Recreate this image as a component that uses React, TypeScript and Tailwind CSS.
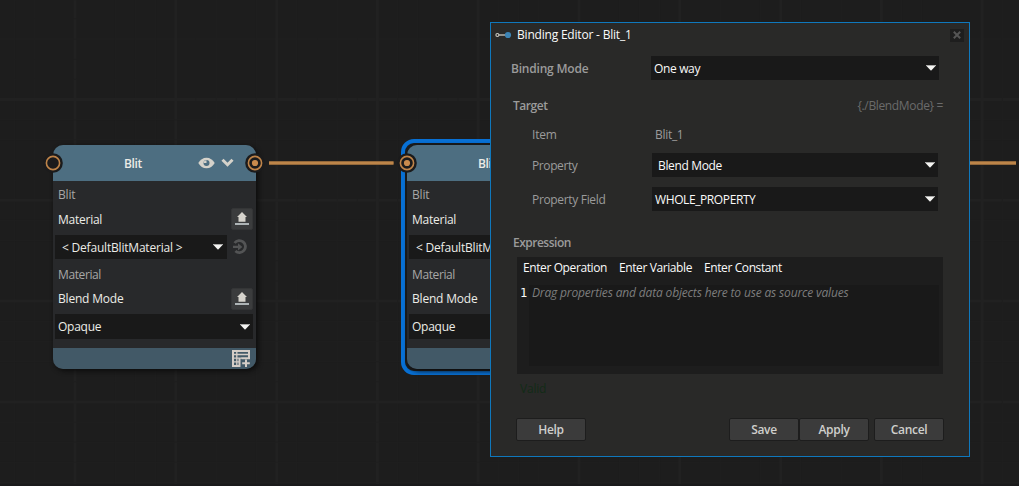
import type { ReactNode } from "react";

function Caret({ className = "" }: { className?: string }) {
  return (
    <svg className={`shrink-0 ${className}`} width="10" height="6" viewBox="0 0 10 6">
      <path d="M0 0.5H10L5 5.7Z" fill="#f4f4f2" />
      <path d="M0 0.5H10" stroke="#a9a9a8" strokeWidth="1" />
    </svg>
  );
}

function Port({ connected = false, className = "" }: { connected?: boolean; className?: string }) {
  return (
    <svg className={`absolute ${className}`} width="20" height="20" viewBox="0 0 20 20">
      <circle cx="10" cy="10" r="9.8" fill="#1b1b1c" />
      <circle cx="10" cy="10" r="6.6" fill="none" stroke="#bf8449" strokeWidth="1.6" />
      {connected && <circle cx="10" cy="10" r="3.1" fill="#c98b4d" />}
    </svg>
  );
}

function UploadButton({ className = "" }: { className?: string }) {
  return (
    <div className={`flex w-[22px] shrink-0 items-center justify-center rounded-[2px] border border-[#343536] bg-[#3b3c3d] ${className}`}>
      <svg width="16" height="14" viewBox="0 0 16 14">
        <path d="M8 0L13 5H11.5V9.8H4.5V5H3Z" fill="#d6d3cc" />
        <path d="M1 12H15" stroke="#aeb4b6" strokeWidth="2" />
      </svg>
    </div>
  );
}

function BlitNode({ className = "" }: { className?: string }) {
  return (
    <div className={`absolute top-[145px] h-[224px] w-[203px] text-[#ecece7] ${className}`}>
      <div className="flex h-full flex-col overflow-hidden rounded-[10px] bg-[#28292b] shadow-[2px_2px_5px_#0c0c0c]">
        {/* Header */}
        <div className="flex h-9 shrink-0 items-center bg-[#4d6e81] pl-[71px]">
          <span className="w-[74px] pt-px font-semibold tracking-[-0.4px]">Blit</span>
          <svg width="17" height="12" viewBox="0 0 17 12">
            <path d="M0.3 6C2.3 2.7 5 0.7 8.5 0.7S14.7 2.7 16.7 6C14.7 9.3 12 11.3 8.5 11.3S2.3 9.3 0.3 6Z" fill="#d5d2ca" />
            <circle cx="8.5" cy="6" r="3" fill="#4d6e81" />
            <path d="M8.5 6V3.2A2.8 2.8 0 0 0 5.7 6Z" fill="#d5d2ca" />
          </svg>
          <svg className="ml-[6px]" width="13" height="10" viewBox="0 0 13 10">
            <path d="M1.5 1.8L6.5 6.7L11.5 1.8" fill="none" stroke="#d5d2ca" strokeWidth="3" />
          </svg>
        </div>

        {/* Properties */}
        <div className="flex h-[167px] shrink-0 flex-col pt-1">
          <div className="flex h-5 items-center pl-[5px] text-[#a7a7a6]">
            <span className="tracking-[-0.2px]">Blit</span>
          </div>
          <div className="mt-[3px] flex h-[22px] items-center justify-between pl-[5px] pr-[3px]">
            <span className="pt-[2px] tracking-[-0.25px]">Material</span>
            <UploadButton className="h-[22px]" />
          </div>
          <div className="mt-[5px] flex h-6 items-center pl-[2px]">
            <div className="flex h-6 w-[172px] items-center justify-between bg-[#191919] pl-[7px] pr-1">
              <span className="pt-px tracking-[-0.2px]">&lt; DefaultBlitMaterial &gt;</span>
              <Caret />
            </div>
            <svg className="ml-[5px]" width="16" height="16" viewBox="0 0 16 16">
              <path d="M2.6 4A6 6 0 1 1 3.4 12" fill="none" stroke="#535455" strokeWidth="2.8" />
              <path d="M1 7.9H7" stroke="#535455" strokeWidth="2.2" />
              <path d="M6 4.2L10.4 7.9L6 11.6Z" fill="#535455" />
            </svg>
          </div>
          <div className="mt-[6px] flex h-5 items-center pl-[5px] text-[#a7a7a6]">
            <span className="tracking-[-0.4px]">Material</span>
          </div>
          <div className="mt-[3px] flex h-[21px] items-center justify-between pl-[5px] pr-[3px]">
            <span className="tracking-[-0.2px]">Blend Mode</span>
            <UploadButton className="h-[22px]" />
          </div>
          <div className="ml-[2px] mt-[5px] flex h-[25px] w-[198px] items-center justify-between bg-[#191919] pl-[3px] pr-[3px]">
            <span className="tracking-[-0.25px]">Opaque</span>
            <Caret />
          </div>
        </div>

        {/* Footer */}
        <div className="flex flex-1 items-start justify-end bg-[#425967] pr-[6px] pt-[2px]">
          <svg width="18" height="17" viewBox="0 0 18 17" fill="none" stroke="#d4cdc7">
            <path d="M1 1H17V8.2H9.5M1 0V16H7.5V8" strokeWidth="2" />
            <path d="M1 4.5H17M1 8.2H10M4.8 1V16M1 11.8H7.5" strokeWidth="1.3" />
            <path d="M14 9.5V17M10.2 13.2H17.8" strokeWidth="2" />
          </svg>
        </div>
      </div>
    </div>
  );
}

function Grid() {
  const lines = Array.from({ length: 52 }, (_, i) => i - 4);
  return (
    <svg className="absolute inset-0" width="1019" height="486">
      {lines.map((i) => (
        <g key={i} stroke={i % 5 === 0 ? "#212121" : "#1f1f1f"} strokeWidth={i % 5 === 0 ? 3 : 1}>
          <path d={`M${75 + i * 20.16} 0V486`} />
          <path d={`M0 ${99.5 + (i - 5) * 20.16}H1019`} />
        </g>
      ))}
      <path d="M0 485H1019" stroke="#1a1a1b" strokeWidth="2" />
    </svg>
  );
}

function Select({ children, className }: { children: ReactNode; className: string }) {
  return (
    <div className={`flex h-6 items-center justify-between bg-[#191919] pr-[3px] text-[#fafafa] ${className}`}>
      {children}
      <Caret />
    </div>
  );
}

function Button({ label, className = "" }: { label: string; className?: string }) {
  return (
    <button className={`h-[23px] w-[70px] shrink-0 rounded-[2px] border border-[#1d1d1d] bg-[#3b3b3b] font-semibold tracking-[-0.3px] text-[#cfcfcc] ${className}`}>
      {label}
    </button>
  );
}

function BindingEditor() {
  return (
    <div className="absolute left-[490px] top-[22px] flex h-[435px] w-[480px] flex-col border border-[#0f78bd] bg-[#292928] text-[#9b9b9b]">
      {/* Title bar */}
      <div className="flex h-6 shrink-0 items-center pl-1 pr-[5px] text-[#fafafa]">
        <svg width="17" height="8" viewBox="0 0 17 8">
          <circle cx="2.4" cy="4" r="1.5" fill="none" stroke="#cbc9c2" strokeWidth="1.1" />
          <path d="M4 4H11" stroke="#cbc9c2" strokeWidth="1.3" />
          <circle cx="13" cy="4" r="3.1" fill="#3d84b4" />
        </svg>
        <span className="ml-[5px] flex-1 tracking-[-0.2px]">Binding Editor - Blit_1</span>
        <div className="flex h-[13px] w-[14px] items-center justify-center bg-[#1e1e1e]">
          <svg width="8" height="8" viewBox="0 0 8 8">
            <path d="M0.8 0.8L7.2 7.2M7.2 0.8L0.8 7.2" stroke="#555555" strokeWidth="2" />
          </svg>
        </div>
      </div>

      <div className="mt-[9px] flex shrink-0 items-center pl-5">
        <span className="w-[140px] pt-[2px] font-semibold tracking-[-0.2px]">Binding Mode</span>
        <Select className="w-[288px] pl-[3px]">
          <span className="pt-[2px] tracking-[-0.35px]">One way</span>
        </Select>
      </div>

      {/* Target */}
      <div className="mt-4 flex h-5 shrink-0 items-center justify-between pl-[22px] pr-[26px]">
        <span className="font-semibold tracking-[-0.45px]">Target</span>
        <span className="tracking-[-0.35px] text-[#6b6b6b]">{"{./BlendMode} ="}</span>
      </div>
      <div className="mt-[9px] flex h-5 shrink-0 items-center pl-[41px]">
        <span className="w-[123px] tracking-[-0.2px]">Item</span>
        <span className="tracking-[-0.3px]">Blit_1</span>
      </div>
      <div className="mt-2 flex shrink-0 items-center pl-[41px]">
        <span className="w-[120px] pt-[2px] tracking-[-0.4px]">Property</span>
        <Select className="w-[286px] pl-[6px]">
          <span className="pt-[2px] tracking-[-0.35px]">Blend Mode</span>
        </Select>
      </div>
      <div className="mt-[10px] flex shrink-0 items-center pl-[41px]">
        <span className="w-[120px] pt-[2px] tracking-[-0.33px]">Property Field</span>
        <Select className="w-[286px] pl-[3px]">
          <span className="pt-[2px] tracking-[-0.4px]">WHOLE_PROPERTY</span>
        </Select>
      </div>

      {/* Expression */}
      <div className="mt-[22px] flex h-5 shrink-0 items-center pl-[22px]">
        <span className="font-semibold tracking-[-0.5px]">Expression</span>
      </div>
      <div className="ml-[26px] mt-1 flex h-[117px] w-[426px] shrink-0 flex-col bg-[#1d1d1d] text-[#fafafa]">
        <div className="flex h-[22px] items-center pl-[6px]">
          <span className="w-[96px] tracking-[-0.4px]">Enter Operation</span>
          <span className="w-[85px] tracking-[-0.4px]">Enter Variable</span>
          <span className="tracking-[-0.4px]">Enter Constant</span>
        </div>
        <div className="mt-[6px] flex h-[81px]">
          <span className="w-3 pl-[3px] font-['DejaVu_Sans_Mono',monospace] text-[12px]">1</span>
          <div className="mr-1 flex-1 bg-[#191919] pl-[3px] italic text-[#7d7d7d]">
            <span className="tracking-[-0.16px]">Drag properties and data objects here to use as source values</span>
          </div>
        </div>
      </div>
      <div className="mt-[5px] flex h-5 shrink-0 items-center pl-[29px] tracking-[-0.2px] text-[#122b17]">Valid</div>

      <div className="mt-[19px] flex shrink-0 pl-[25px]">
        <Button label="Help" />
        <Button label="Save" className="ml-[143px]" />
        <Button label="Apply" />
        <Button label="Cancel" className="ml-[5px]" />
      </div>
    </div>
  );
}

export default function App() {
  return (
    <div className="relative h-[486px] w-[1019px] overflow-hidden bg-[#1d1d1d] font-['Open_Sans','Noto_Sans',sans-serif] text-[12px] leading-4 whitespace-nowrap">
      <Grid />

      <BlitNode className="left-[53px]" />
      <div className="absolute left-[401px] top-[139px] h-[236px] w-[215px] rounded-[13px] border-4 border-[#0870d4] bg-[#1b1c1d]" />
      <BlitNode className="left-[407px]" />

      {/* Connections */}
      <svg className="absolute inset-0" width="1019" height="486">
        <path d="M269 163H393.5M960 163H1016" stroke="#855f37" strokeWidth="4" />
        <path d="M269 163H393.5M960 163H1016" stroke="#bd8549" strokeWidth="2.4" />
      </svg>
      <Port className="left-[43px] top-[153px]" />
      <Port connected className="left-[245px] top-[153px]" />
      <Port connected className="left-[397px] top-[153px]" />

      <BindingEditor />
    </div>
  );
}
